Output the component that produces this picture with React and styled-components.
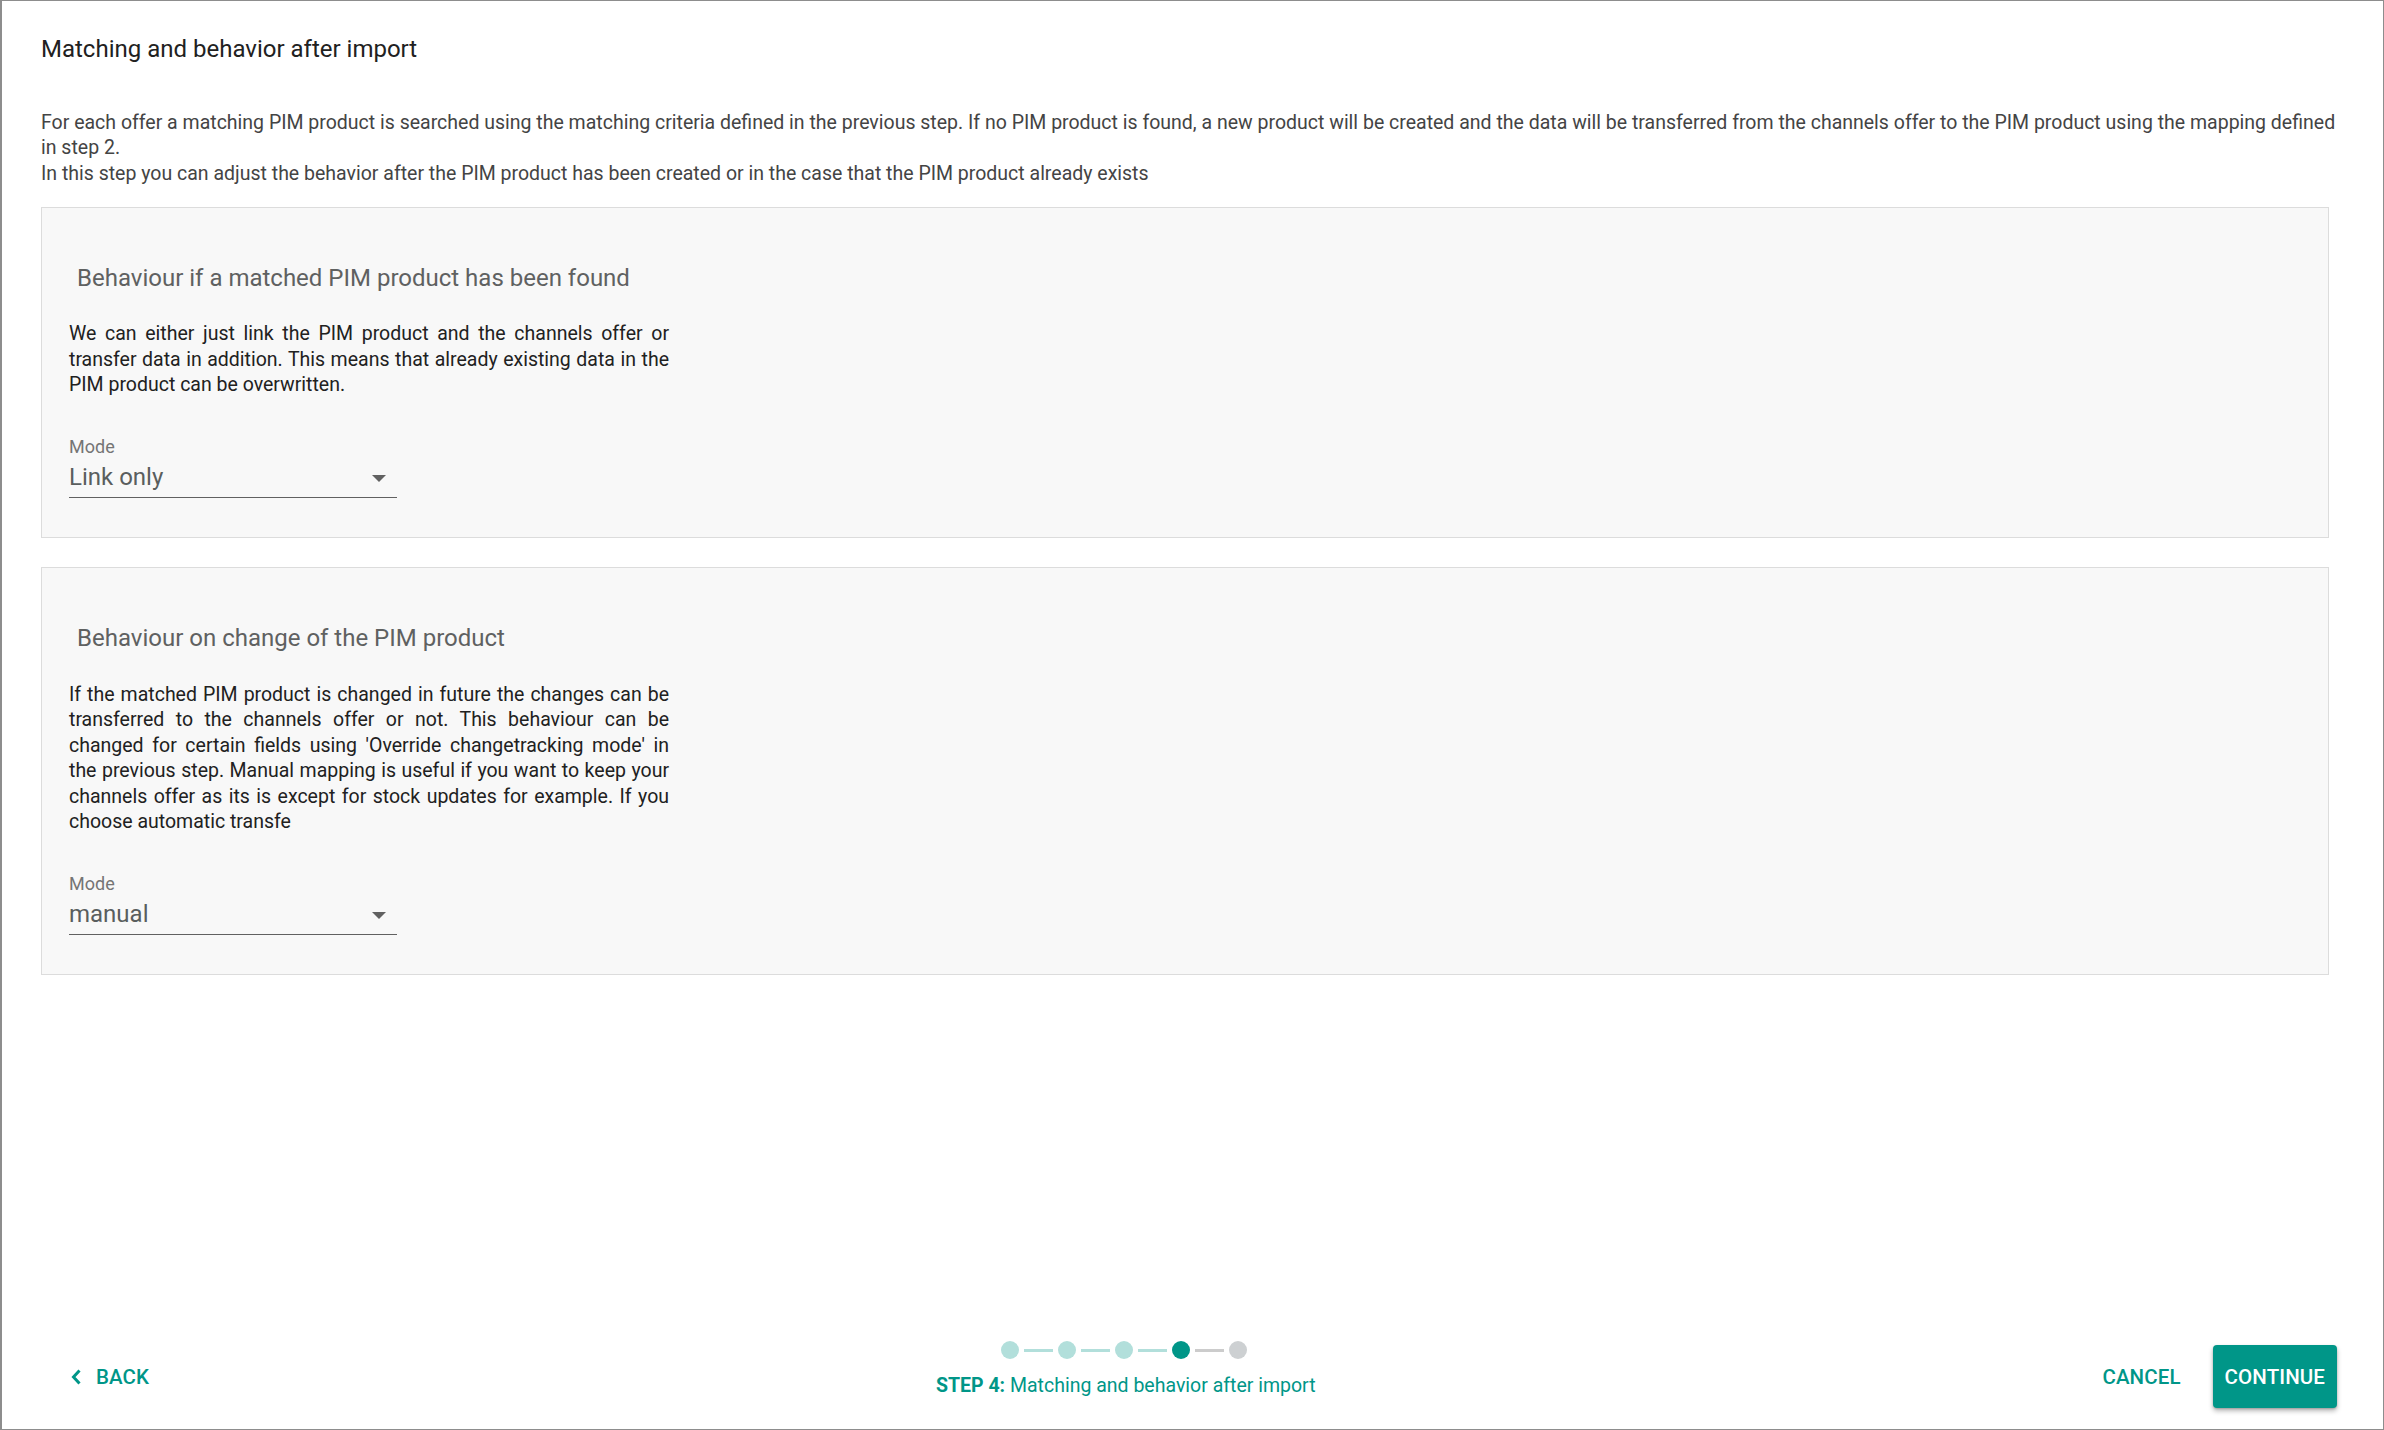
import React from "react";
import styled, { createGlobalStyle } from "styled-components";

const GlobalStyle = createGlobalStyle`
  html, body {
    margin: 0;
    padding: 0;
    background: #ffffff;
  }
  body {
    font-family: Roboto, "Noto Sans", "Liberation Sans", sans-serif;
    -webkit-font-smoothing: antialiased;
  }
  *, *::before, *::after {
    box-sizing: border-box;
  }
`;

const TEAL = "#009688";
const TEAL_LIGHT = "#b2dfdb";

const Page = styled.div`
  height: 100vh;
  width: 100%;
  display: flex;
  flex-direction: column;
  background: #ffffff;
  border: 1px solid #8d8d8d;
  border-left-width: 2px;
`;

const Main = styled.main`
  flex: 1;
  padding: 33.5px 54px 0 39px;
`;

const Title = styled.h1`
  margin: 0;
  font-size: 24px;
  line-height: 28px;
  font-weight: 400;
  color: #212121;
`;

const Intro = styled.p`
  margin: 47px -14px 0 0;
  font-size: 19.5px;
  line-height: 25.5px;
  color: #444444;
`;

const Sections = styled.div`
  margin-top: 20.5px;
  display: flex;
  flex-direction: column;
  gap: 29px;
`;

const Card = styled.section`
  background: #f8f8f8;
  border: 1px solid #dcdcdc;
  padding: 56px 27px 39px;
`;

const CardTitle = styled.h2`
  margin: 0 0 0 8px;
  font-size: 24px;
  line-height: 28px;
  font-weight: 400;
  color: #5f6161;
`;

const CardText = styled.p`
  margin: 29.5px 0 0;
  max-width: 600px;
  text-align: justify;
  font-size: 19.5px;
  line-height: 25.5px;
  color: #212121;
`;

const Field = styled.div`
  margin-top: 38px;
  width: 328px;
`;

const FieldLabel = styled.label`
  display: block;
  font-size: 18px;
  line-height: 21px;
  color: #757575;
`;

const SelectBox = styled.div`
  margin-top: 6.5px;
  display: flex;
  align-items: center;
  justify-content: space-between;
  padding-bottom: 6px;
  border-bottom: 1px solid #616161;
  font-size: 24px;
  line-height: 28px;
  color: #5a5e5e;
  cursor: pointer;
`;

const Caret = styled.span`
  width: 0;
  height: 0;
  margin-right: 11px;
  margin-top: 2px;
  border-left: 7px solid transparent;
  border-right: 7px solid transparent;
  border-top: 7px solid #616161;
`;

const Footer = styled.footer`
  display: grid;
  grid-template-columns: auto 1fr auto;
  align-items: center;
  padding: 0 46px 21px 53px;
`;

const TextButton = styled.button`
  display: inline-flex;
  align-items: center;
  gap: 15px;
  height: 63px;
  padding: 0 16px;
  border: none;
  background: transparent;
  font-family: inherit;
  font-size: 20.5px;
  font-weight: 500;
  letter-spacing: 0.1px;
  text-transform: uppercase;
  color: ${TEAL};
  cursor: pointer;
`;

const PrimaryButton = styled(TextButton)`
  padding: 0 12px;
  border-radius: 4px;
  background: ${TEAL};
  color: #ffffff;
  box-shadow: 0 3px 5px rgba(0, 0, 0, 0.28), 0 1px 2px rgba(0, 0, 0, 0.18);
`;

const Actions = styled.div`
  display: flex;
  align-items: center;
  gap: 16px;
`;

const Stepper = styled.div`
  justify-self: center;
  align-self: start;
  margin-top: -4px;
  display: flex;
  flex-direction: column;
  align-items: center;
`;

const Track = styled.div`
  display: flex;
  align-items: center;
  margin-left: -3px;
`;

const Dot = styled.span`
  width: 18px;
  height: 18px;
  border-radius: 50%;
  background: ${(p) =>
    p.$state === "active" ? TEAL : p.$state === "done" ? TEAL_LIGHT : "#cdd0d2"};
`;

const Connector = styled.span`
  width: 29px;
  height: 3px;
  margin: 0 5px;
  background: ${(p) => (p.$done ? TEAL_LIGHT : "#cccccc")};
`;

const StepLabel = styled.div`
  margin-top: 15px;
  font-size: 19.5px;
  line-height: 24px;
  color: ${TEAL};
  white-space: nowrap;

  strong {
    font-weight: 700;
  }
`;

const ChevronLeft = () => (
  <svg width="10" height="16" viewBox="0 0 10 16" aria-hidden="true">
    <polyline
      points="8.5,1.5 2.5,8 8.5,14.5"
      fill="none"
      stroke={TEAL}
      strokeWidth="3"
    />
  </svg>
);

const steps = ["done", "done", "done", "active", "todo"];

const sections = [
  {
    title: "Behaviour if a matched PIM product has been found",
    text: "We can either just link the PIM product and the channels offer or transfer data in addition. This means that already existing data in the PIM product can be overwritten.",
    value: "Link only",
  },
  {
    title: "Behaviour on change of the PIM product",
    text: "If the matched PIM product is changed in future the changes can be transferred to the channels offer or not. This behaviour can be changed for certain fields using 'Override changetracking mode' in the previous step. Manual mapping is useful if you want to keep your channels offer as its is except for stock updates for example. If you choose automatic transfe",
    value: "manual",
  },
];

export default function App() {
  return (
    <>
      <GlobalStyle />
      <Page>
        <Main>
          <Title>Matching and behavior after import</Title>
          <Intro>
            For each offer a matching PIM product is searched using the matching
            criteria defined in the previous step. If no PIM product is found, a
            new product will be created and the data will be transferred from
            the channels offer to the PIM product using the mapping defined in
            step 2.
            <br />
            In this step you can adjust the behavior after the PIM product has
            been created or in the case that the PIM product already exists
          </Intro>
          <Sections>
            {sections.map((s) => (
              <Card key={s.title}>
                <CardTitle>{s.title}</CardTitle>
                <CardText>{s.text}</CardText>
                <Field>
                  <FieldLabel>Mode</FieldLabel>
                  <SelectBox>
                    <span>{s.value}</span>
                    <Caret />
                  </SelectBox>
                </Field>
              </Card>
            ))}
          </Sections>
        </Main>
        <Footer>
          <TextButton>
            <ChevronLeft />
            Back
          </TextButton>
          <Stepper>
            <Track>
              {steps.map((st, i) => (
                <React.Fragment key={i}>
                  {i > 0 && <Connector $done={st !== "todo"} />}
                  <Dot $state={st} />
                </React.Fragment>
              ))}
            </Track>
            <StepLabel>
              <strong>STEP 4:</strong> Matching and behavior after import
            </StepLabel>
          </Stepper>
          <Actions>
            <TextButton>Cancel</TextButton>
            <PrimaryButton>Continue</PrimaryButton>
          </Actions>
        </Footer>
      </Page>
    </>
  );
}
